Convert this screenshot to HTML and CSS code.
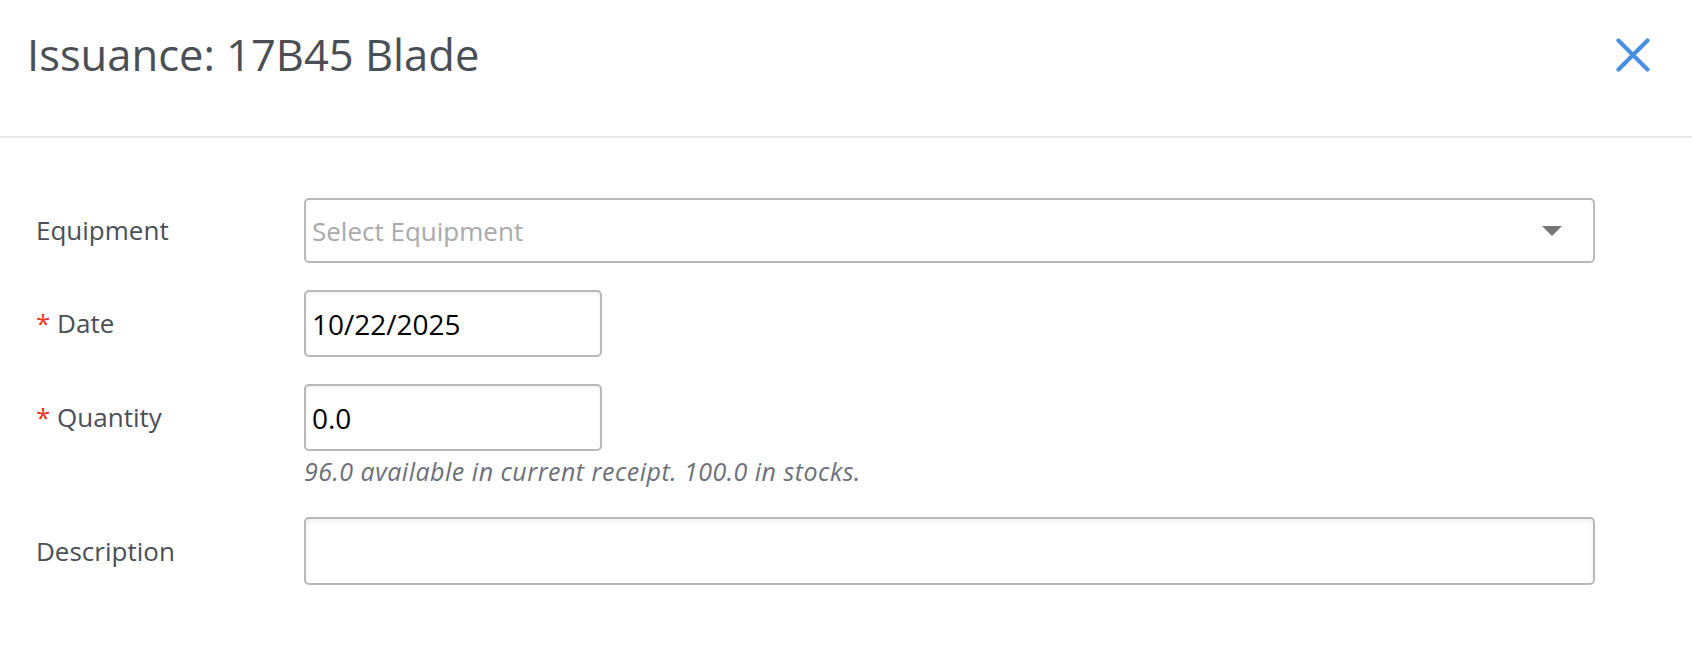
FILE: index.html
```html
<!DOCTYPE html>
<html lang="en">
<head>
<meta charset="utf-8">
<title>Issuance: 17B45 Blade</title>
<link rel="stylesheet" href="styles.css">
</head>
<body>
<div class="modal">
  <header class="modal-header">
    <h1 class="modal-title">Issuance: 17B45 Blade</h1>
    <button class="close-btn" type="button" aria-label="Close">
      <svg width="34" height="34" viewBox="0 0 34 34" aria-hidden="true">
        <path d="M2.5 2.5 L31.5 31.5 M31.5 2.5 L2.5 31.5" stroke="#4a90e2" stroke-width="4.2" stroke-linecap="round" fill="none"/>
      </svg>
    </button>
  </header>
  <form class="modal-body">
    <div class="form-row">
      <label class="form-label">Equipment</label>
      <div class="field wide">
        <div class="select-box">
          <span class="placeholder">Select Equipment</span>
          <span class="caret"></span>
        </div>
      </div>
    </div>
    <div class="form-row">
      <label class="form-label tall"><span class="req">*</span> Date</label>
      <div class="field">
        <input class="form-input short" type="text" value="10/22/2025">
      </div>
    </div>
    <div class="form-row has-help">
      <label class="form-label tall"><span class="req">*</span> Quantity</label>
      <div class="field">
        <input class="form-input short" type="text" value="0.0">
        <div class="help">96.0 available in current receipt. 100.0 in stocks.</div>
      </div>
    </div>
    <div class="form-row">
      <label class="form-label taller">Description</label>
      <div class="field wide">
        <input class="form-input full inset" type="text" value="">
      </div>
    </div>
  </form>
</div>
</body>
</html>
```

FILE: styles.css
```css
* { box-sizing: border-box; }

html, body {
  margin: 0;
  padding: 0;
  background: #ffffff;
}

body {
  font-family: "Open Sans", "Noto Sans", "Liberation Sans", sans-serif;
  color: #4a4f55;
}

.modal {
  width: 1692px;
  height: 670px;
  background: #fff;
}

.modal-header {
  display: flex;
  align-items: flex-start;
  justify-content: space-between;
  height: 138px;
  padding: 25px 42px 0 27px;
  border-bottom: 2px solid #e6e6e6;
}

.modal-title {
  margin: 0;
  font-size: 43.5px;
  font-weight: 400;
  line-height: 60px;
  color: #4a4f55;
}

.close-btn {
  margin-top: 13px;
  padding: 0;
  border: 0;
  background: transparent;
  width: 34px;
  height: 34px;
  display: flex;
  cursor: pointer;
}

.modal-body {
  padding: 60px 97px 0 36px;
  display: flex;
  flex-direction: column;
  gap: 27px;
}

.form-row {
  display: grid;
  grid-template-columns: 268px 1fr;
  align-items: start;
}

.form-label {
  font-size: 26px;
  line-height: 65px;
  color: #4a4f55;
  white-space: nowrap;
}

.form-label.tall { line-height: 67px; }
.form-label.taller { line-height: 68px; }

.req {
  color: #f0321e;
}

.field.wide { width: 100%; }

.select-box {
  display: flex;
  align-items: center;
  justify-content: space-between;
  height: 65px;
  padding: 0 31px 0 6px;
  border: 2px solid #b8b8b8;
  border-radius: 5px;
  background: #fff;
}

.placeholder {
  font-size: 26px;
  color: #a9a9a9;
}

.caret {
  width: 0;
  height: 0;
  border-left: 10px solid transparent;
  border-right: 10px solid transparent;
  border-top: 10px solid #777;
  margin-top: 1px;
}

.form-input {
  display: block;
  height: 67px;
  padding: 0 6px;
  border: 2px solid #b8b8b8;
  border-radius: 5px;
  font-family: "Open Sans", "Noto Sans", "Liberation Sans", sans-serif;
  font-size: 28px;
  color: #000;
  background: #fff;
  outline: none;
  box-shadow: inset 0 2px 3px rgba(0, 0, 0, 0.05);
}

.form-input.short { width: 298px; }
.form-input.full { width: 100%; height: 68px; }
.form-input.inset { box-shadow: inset 0 3px 5px rgba(0, 0, 0, 0.06); }

.help {
  margin-top: 4px;
  font-size: 25px;
  font-style: italic;
  letter-spacing: 0.5px;
  line-height: 33px;
  color: #6c7079;
  white-space: nowrap;
}

.has-help + .form-row { margin-top: 2px; }
```
